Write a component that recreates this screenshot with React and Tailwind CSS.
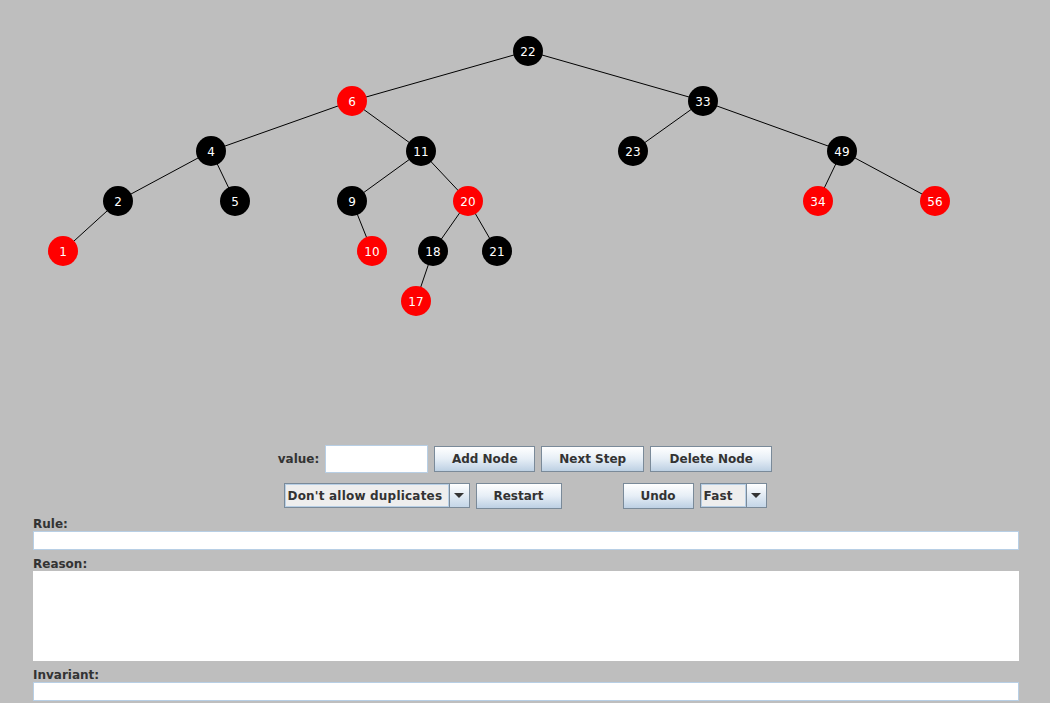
import React from "react";

const nodes = {
  22: { x: 528, y: 51, red: false },
  6: { x: 352, y: 101, red: true },
  33: { x: 703, y: 101, red: false },
  4: { x: 211, y: 151, red: false },
  11: { x: 421, y: 151, red: false },
  23: { x: 633, y: 151, red: false },
  49: { x: 842, y: 151, red: false },
  2: { x: 118, y: 201, red: false },
  5: { x: 235, y: 201, red: false },
  9: { x: 352, y: 201, red: false },
  20: { x: 468, y: 201, red: true },
  34: { x: 818, y: 201, red: true },
  56: { x: 935, y: 201, red: true },
  1: { x: 63, y: 251, red: true },
  10: { x: 372, y: 251, red: true },
  18: { x: 433, y: 251, red: false },
  21: { x: 497, y: 251, red: false },
  17: { x: 416, y: 301, red: true },
};

const edges = [
  [22, 6], [22, 33], [6, 4], [6, 11], [33, 23], [33, 49],
  [4, 2], [4, 5], [11, 9], [11, 20], [49, 34], [49, 56],
  [2, 1], [9, 10], [20, 18], [20, 21], [18, 17],
];

const font = { fontFamily: '"DejaVu Sans", Verdana, sans-serif' };

const Button = ({ label, width }) => (
  <button
    className={`${width} h-[26px] border border-[#7a8a99] bg-linear-to-b from-white via-[#e6eef6] to-[#bdd0e3] text-[12px] font-bold text-[#333333] leading-none`}
  >
    {label}
  </button>
);

const Combo = ({ label, width }) => (
  <div className={`${width} h-[25px] flex border border-[#7a8a99] bg-[#eeeeee]`}>
    <div className="flex-1 flex items-center pl-[2px] text-[12px] font-bold text-[#333333] border border-[#b8cfe5] tracking-[0.2px]">
      {label}
    </div>
    <div className="w-[20px] h-full flex items-center justify-center border-l border-[#7a8a99] bg-linear-to-b from-white to-[#c4d6e8]">
      <div className="w-0 h-0 border-l-[5px] border-r-[5px] border-t-[5px] border-l-transparent border-r-transparent border-t-[#333333]" />
    </div>
  </div>
);

const Tree = () => (
  <svg width="1050" height="440" className="block">
    {edges.map(([a, b]) => (
      <line
        key={`${a}-${b}`}
        x1={nodes[a].x}
        y1={nodes[a].y}
        x2={nodes[b].x}
        y2={nodes[b].y}
        stroke="#000"
        strokeWidth="1"
      />
    ))}
    {Object.entries(nodes).map(([k, n]) => (
      <g key={k}>
        <circle cx={n.x} cy={n.y} r="15" fill={n.red ? "#ff0000" : "#000000"} />
        <text
          x={n.x}
          y={n.y + 4.5}
          textAnchor="middle"
          fill="#ffffff"
          fontSize="12"
          fontFamily='"DejaVu Sans", sans-serif'
        >
          {k}
        </text>
      </g>
    ))}
  </svg>
);

const Label = ({ text, className }) => (
  <div className={`ml-[33px] h-[14px] leading-[14px] text-[12px] font-bold text-[#333333] ${className}`}>
    {text}
  </div>
);

export default function App() {
  return (
    <div className="w-[1050px] h-[703px] bg-[#bebebe] overflow-hidden flex flex-col" style={font}>
      <div className="h-[440px] shrink-0">
        <Tree />
      </div>

      {/* controls */}
      <div className="flex items-center justify-center gap-[6px] mt-[5px] h-[27px]">
        <span className="text-[12px] font-bold text-[#333333]">value:</span>
        <div className="w-[103px] h-[28px] bg-white border border-[#b8cfe5]" />
        <Button label="Add Node" width="w-[101px]" />
        <Button label="Next Step" width="w-[103px]" />
        <Button label="Delete Node" width="w-[122px]" />
      </div>

      <div className="flex items-center justify-center mt-[11px] h-[25px]">
        <Combo label="Don't allow duplicates" width="w-[186px]" />
        <div className="ml-[6px]">
          <Button label="Restart" width="w-[86px]" />
        </div>
        <div className="ml-[61px]">
          <Button label="Undo" width="w-[71px]" />
        </div>
        <div className="ml-[6px]">
          <Combo label="Fast" width="w-[67px]" />
        </div>
      </div>

      <Label text="Rule:" className="mt-[9px]" />
      <div className="ml-[33px] w-[986px] h-[19px] bg-white border border-[#b8cfe5]" />
      <Label text="Reason:" className="mt-[7px]" />
      <div className="ml-[33px] w-[986px] h-[90px] bg-white" />
      <Label text="Invariant:" className="mt-[7px]" />
      <div className="ml-[33px] w-[986px] h-[19px] bg-white border border-[#b8cfe5]" />
    </div>
  );
}
